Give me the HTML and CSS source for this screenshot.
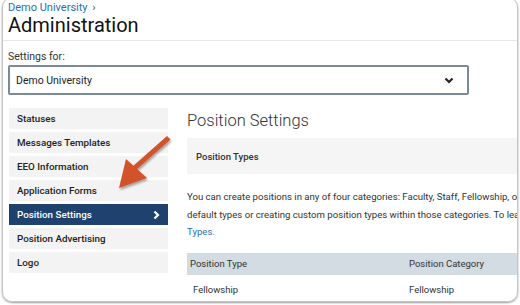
FILE: index.html
```html
<!DOCTYPE html>
<html lang="en">
<head>
    <meta charset="UTF-8">
    <title>Administration - Position Settings</title>
    <link rel="stylesheet" href="styles.css">
</head>
<body>
    <div class="frame">
        <div class="header">
            <div class="crumbs"><a href="#">Demo University</a> <span class="sep">&rsaquo;</span></div>
            <h1 class="title">Administration</h1>
        </div>

        <div class="settings-for">
            <label class="label">Settings for:</label>
            <div class="select">
                <span>Demo University</span>
                <svg width="10" height="7" viewBox="0 0 10 7">
                    <path d="M1.5 1.5 L5 5 L8.5 1.5" fill="none" stroke="#222" stroke-width="2.2"/>
                </svg>
            </div>
        </div>

        <div class="layout">
            <ul class="sidebar">
                <li>Statuses</li>
                <li>Messages Templates</li>
                <li>EEO Information</li>
                <li>Application Forms</li>
                <li class="active">Position Settings
                    <svg width="7" height="10" viewBox="0 0 7 10">
                        <path d="M1.5 1.5 L5 5 L1.5 8.5" fill="none" stroke="#fff" stroke-width="2.2"/>
                    </svg>
                </li>
                <li>Position Advertising</li>
                <li>Logo</li>
            </ul>

            <div class="main">
                <h2 class="section-title">Position Settings</h2>
                <div class="panel">Position Types</div>
                <p class="intro">
                    You can create positions in any of four categories: Faculty, Staff, Fellowship, or Other. You can use the<br>
                    default types or creating custom position types within those categories. To learn more, see <a href="#">Position</a><br>
                    <a href="#">Types.</a>
                </p>
                <table class="types">
                    <thead>
                        <tr><th>Position Type</th><th>Position Category</th></tr>
                    </thead>
                    <tbody>
                        <tr><td>Fellowship</td><td>Fellowship</td></tr>
                    </tbody>
                </table>
            </div>
        </div>

        <!-- callout arrow pointing at Position Settings -->
        <svg class="callout" width="70" height="70" viewBox="0 0 70 70">
            <defs>
                <filter id="drop" x="-20%" y="-20%" width="150%" height="150%">
                    <feDropShadow dx="1" dy="2" stdDeviation="1.2" flood-color="#000" flood-opacity="0.35"/>
                </filter>
            </defs>
            <g filter="url(#drop)" fill="#d2522a">
                <path d="M56 3 L59.5 6.5 L25 37 L21.5 33.5 Z"/>
                <path d="M8 55 L15 26 L36 45 Z"/>
            </g>
        </svg>
    </div>
</body>
</html>
```

FILE: styles.css
```css
body {
    margin: 0;
    background: #fff;
    font-family: Roboto, "Liberation Sans", sans-serif;
    color: #222;
    width: 520px;
    height: 305px;
    overflow: hidden;
}
a {
    color: #2a6fb0;
    text-decoration: none;
}
.frame {
    position: relative;
    box-sizing: border-box;
    width: 516px;
    height: 305px;
    margin: -3px 0 0 2px;
    border: 1px solid #c6c6c6;
    border-radius: 10px;
    box-shadow: 0 1px 2px rgba(0,0,0,0.4);
    overflow: hidden;
}
.header {
    padding: 3px 5px 3px;
    border-bottom: 1px solid #e6e6e6;
}
.crumbs {
    font-size: 11px;
    line-height: 13px;
}
.crumbs .sep {
    color: #555;
    margin-left: 2px;
}
.title {
    margin: 0;
    font-size: 20px;
    font-weight: 400;
    line-height: 23px;
    color: #111;
}
.settings-for {
    padding: 9px 5px 0;
}
.label {
    display: block;
    font-size: 10.5px;
    line-height: 13px;
    color: #333;
    margin-bottom: 2px;
}
.select {
    box-sizing: border-box;
    width: 461px;
    height: 30px;
    border: 2px solid #7b8a98;
    border-radius: 2px;
    display: flex;
    align-items: center;
    justify-content: space-between;
    padding: 0 13px 0 6px;
    font-size: 10.5px;
    color: #222;
}
.layout {
    display: flex;
    gap: 19px;
    padding: 13px 0 0 6px;
}
.sidebar {
    list-style: none;
    margin: 0;
    padding: 0;
    width: 159px;
    flex-shrink: 0;
    display: flex;
    flex-direction: column;
    gap: 3px;
}
.sidebar li {
    background: #f3f3f3;
    height: 21px;
    display: flex;
    align-items: center;
    justify-content: space-between;
    padding: 0 8px;
    font-size: 9.8px;
    font-weight: 500;
    color: #222;
}
.sidebar li.active {
    background: #1f416d;
    color: #fff;
}
.main {
    width: 520px;
    flex-shrink: 0;
}
.section-title {
    margin: 2px 0 0;
    font-size: 16.5px;
    font-weight: 300;
    line-height: 22px;
    color: #333;
}
.panel {
    margin-top: 6px;
    background: #f5f5f5;
    height: 36px;
    display: flex;
    align-items: center;
    padding-left: 9px;
    font-size: 9.5px;
    font-weight: 500;
    color: #333;
}
.intro {
    margin: 14px 0 0;
    font-size: 9.6px;
    line-height: 17.5px;
    color: #333;
    white-space: nowrap;
}
.types {
    margin-top: 12px;
    width: 100%;
    border-collapse: collapse;
    font-size: 9.5px;
    color: #333;
}
.types th {
    background: #d2dce2;
    font-weight: 400;
    text-align: left;
    height: 22px;
    padding: 0 3px;
}
.types th:first-child {
    width: 213px;
}
.types td {
    height: 29px;
    padding: 0 6px;
}
.types td + td {
    padding-left: 3px;
}
.callout {
    position: absolute;
    left: 108px;
    top: 135px;
}
```
